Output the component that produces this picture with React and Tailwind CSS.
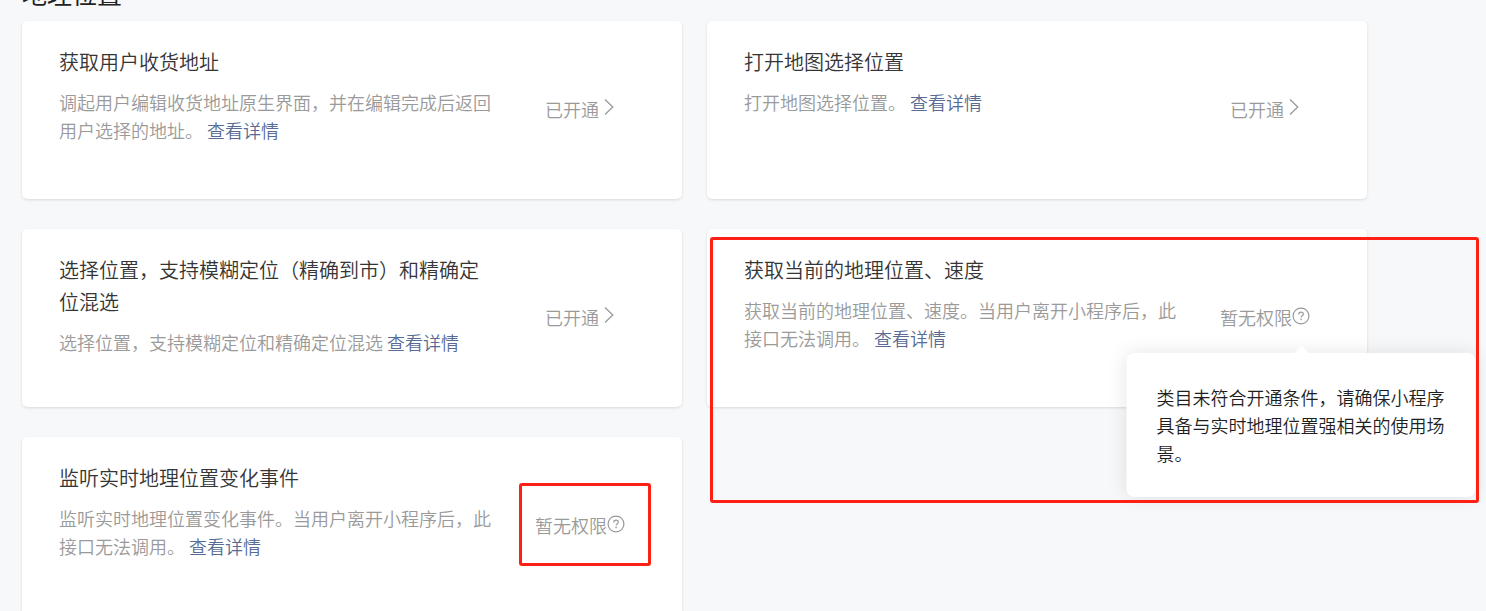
import React from "react";

const items = [
  {
    title: "获取用户收货地址",
    text: "调起用户编辑收货地址原生界面，并在编辑完成后返回用户选择的地址。",
    enabled: true,
  },
  { title: "打开地图选择位置", text: "打开地图选择位置。", enabled: true },
  {
    title: "选择位置，支持模糊定位（精确到市）和精确定位混选",
    text: "选择位置，支持模糊定位和精确定位混选",
    enabled: true,
  },
  {
    title: "获取当前的地理位置、速度",
    text: "获取当前的地理位置、速度。当用户离开小程序后，此接口无法调用。",
    tip: "类目未符合开通条件，请确保小程序具备与实时地理位置强相关的使用场景。",
    mark: "left-[3px] top-2 h-[266px] w-[769px]",
  },
  {
    title: "监听实时地理位置变化事件",
    text: "监听实时地理位置变化事件。当用户离开小程序后，此接口无法调用。",
    mark: "right-[31px] top-[46px] h-[83px] w-[132px]",
  },
];

function Chevron() {
  return (
    <svg className="mb-1 h-[18px] w-3" viewBox="0 0 12 18" fill="none" stroke="currentColor" strokeWidth="1.3" aria-hidden="true">
      <path d="M2 1.5 9.8 9 2 16.5" />
    </svg>
  );
}

function Question() {
  return (
    <svg className="size-[18px]" viewBox="0 0 18 18" fill="none" stroke="currentColor" aria-hidden="true">
      <circle cx="9" cy="9" r="7.9" strokeWidth="1.2" />
      <path d="M6.7 7.4C6.7 5.9 7.7 5.1 9.05 5.1S11.3 5.95 11.3 7.15C11.3 8.7 9.1 8.9 9.1 10.6" strokeWidth="1.2" />
      <circle cx="9.1" cy="12.4" r="0.8" fill="currentColor" stroke="none" />
    </svg>
  );
}

function Tooltip({ children }) {
  return (
    <div role="tooltip" className="absolute left-1/2 top-full z-10 mt-[26px] w-[349px] -translate-x-1/2 rounded-lg bg-white p-[30px] text-left text-[#1f1f1f] shadow-[0_0_20px_rgba(0,0,0,0.1)]">
      <svg className="absolute -top-[7px] left-1/2 h-2 w-4 -translate-x-1/2" viewBox="0 0 16 8" aria-hidden="true">
        <path d="M0 8 7 .8Q8 0 9 .8L16 8Z" fill="#fff" />
      </svg>
      {children}
    </div>
  );
}

function Status({ enabled, tip }) {
  if (enabled) {
    return (
      <a href="#manage" className="flex items-center gap-1">
        已开通
        <Chevron />
      </a>
    );
  }
  return (
    <div className="flex items-center">
      暂无权限
      <div className="relative">
        <button type="button" aria-label="查看原因" className="block pb-0.5">
          <Question />
        </button>
        {tip && <Tooltip>{tip}</Tooltip>}
      </div>
    </div>
  );
}

function Card({ title, text, enabled, tip, mark }) {
  return (
    <section className="relative flex min-h-[178px] gap-6 rounded-[5px] bg-white px-[37px] pb-[27px] pt-[25px] shadow-[0_1px_3px_rgba(0,0,0,0.12)]">
      <div className="min-w-0 flex-1">
        <h3 className="mb-[10px] text-[20px] leading-8 text-[#353535]">{title}</h3>
        <p className="text-[18px] leading-7 text-[#9a9a9a]">
          {text} <a href="#detail" className="text-[#576b95]">查看详情</a>
        </p>
      </div>
      <div className="flex w-[130px] shrink-0 items-center justify-center text-[18px] leading-7 text-[#9a9a9a]">
        <Status enabled={enabled} tip={tip} />
      </div>
      {mark && <div className={`pointer-events-none absolute z-20 rounded-[3px] border-3 border-[#ff2015] ${mark}`} />}
    </section>
  );
}

export default function App() {
  return (
    <div className="h-screen overflow-hidden bg-[#f7f8fa] font-['Noto_Sans_CJK_SC',sans-serif] font-[350]">
      <main className="-mt-[25px] pl-[22px] pr-[119px]">
        <h2 className="mb-[10px] text-[25px] font-normal leading-9 text-[#222]">地理位置</h2>
        <div className="grid grid-cols-2 gap-x-[25px] gap-y-[30px]">
          {items.map((item) => (
            <Card key={item.title} {...item} />
          ))}
        </div>
      </main>
    </div>
  );
}
